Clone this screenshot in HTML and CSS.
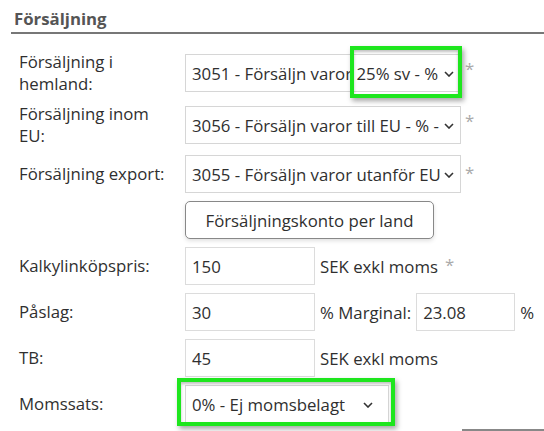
FILE: index.html
```html
<!DOCTYPE html>
<html lang="sv">
<head>
<meta charset="utf-8">
<title>Försäljning</title>
<link rel="stylesheet" href="styles.css">
</head>
<body>
<section class="section">
  <h2 class="section-title">Försäljning</h2>
  <div class="rows">
    <div class="row">
      <div class="label">Försäljning i hemland:</div>
      <div class="select wide"><span class="select-text">3051 - Försäljn varor 25% sv - %</span><svg class="chev" viewBox="0 0 10 6"><path d="M1 1l4 4 4-4" fill="none" stroke="#333" stroke-width="1.6"/></svg></div>
      <span class="req">*</span>
    </div>
    <div class="row">
      <div class="label">Försäljning inom EU:</div>
      <div class="select wide"><span class="select-text">3056 - Försäljn varor till EU - % -</span><svg class="chev" viewBox="0 0 10 6"><path d="M1 1l4 4 4-4" fill="none" stroke="#333" stroke-width="1.6"/></svg></div>
      <span class="req">*</span>
    </div>
    <div class="row">
      <div class="label">Försäljning export:</div>
      <div class="select wide"><span class="select-text">3055 - Försäljn varor utanför EU</span><svg class="chev" viewBox="0 0 10 6"><path d="M1 1l4 4 4-4" fill="none" stroke="#333" stroke-width="1.6"/></svg></div>
      <span class="req">*</span>
    </div>
    <div class="row">
      <div class="label"></div>
      <button class="btn" type="button">Försäljningskonto per land</button>
    </div>
    <div class="row">
      <div class="label">Kalkylinköpspris:</div>
      <div class="input">150</div>
      <span class="unit">SEK exkl moms</span>
      <span class="req small">*</span>
    </div>
    <div class="row">
      <div class="label">Påslag:</div>
      <div class="input">30</div>
      <span class="unit">% Marginal:</span>
      <div class="input narrow">23.08</div>
      <span class="unit pct">%</span>
    </div>
    <div class="row">
      <div class="label">TB:</div>
      <div class="input">45</div>
      <span class="unit">SEK exkl moms</span>
    </div>
    <div class="row">
      <div class="label">Momssats:</div>
      <div class="select vat"><span class="select-text">0% - Ej momsbelagt</span><svg class="chev" viewBox="0 0 10 6"><path d="M1 1l4 4 4-4" fill="none" stroke="#333" stroke-width="1.6"/></svg></div>
    </div>
  </div>
  <div class="next-rule"></div>
</section>
<div class="highlight hl-1"></div>
<div class="highlight hl-2"></div>
</body>
</html>
```
FILE: styles.css
```css
html, body {
  margin: 0;
  padding: 0;
  background: #fff;
}
body {
  font-family: "Open Sans", "Liberation Sans", sans-serif;
  font-size: 16.8px;
  color: #2f2f2f;
  width: 544px;
  height: 431px;
  overflow: hidden;
  position: relative;
}
.section {
  margin-left: 11px;
  padding-top: 8px;
}
.section-title {
  margin: 0;
  padding: 0 0 3px 3px;
  font-size: 16.8px;
  font-weight: 700;
  line-height: 21px;
  color: #555;
  border-bottom: 2px solid #777;
}
.rows {
  display: flex;
  flex-direction: column;
  gap: 8px;
  padding: 17px 0 0 8px;
}
.row {
  display: flex;
  align-items: center;
  min-height: 38px;
}
.label {
  width: 150px;
  margin-right: 16px;
  line-height: 22px;
  flex: none;
}
.select {
  position: relative;
  box-sizing: border-box;
  height: 38px;
  border: 1px solid #d6d6d6;
  background: #fff;
  display: flex;
  align-items: center;
  padding: 0 18px 0 6px;
  overflow: hidden;
  flex: none;
}
.select.wide { width: 276px; }
.select.vat { width: 204px; }
.select-text {
  white-space: nowrap;
  overflow: hidden;
  display: block;
}
.chev {
  position: absolute;
  right: 6px;
  top: 16px;
  width: 10px;
  height: 6px;
}
.select.vat .chev { right: 15px; }
.req {
  color: #aaa;
  margin-left: 4px;
  align-self: flex-start;
  margin-top: 6px;
}
.req.small { margin-left: 2px; margin-top: 6px; }
.btn {
  box-sizing: border-box;
  width: 249px;
  height: 38px;
  border: 1px solid #888;
  border-radius: 5px;
  background: #fff;
  font: inherit;
  color: #2f2f2f;
  box-shadow: 0 2px 4px rgba(0,0,0,0.12);
  padding: 0;
}
.input {
  box-sizing: border-box;
  width: 130px;
  height: 38px;
  border: 1px solid #dcdcdc;
  padding: 0 6px;
  display: flex;
  align-items: center;
  flex: none;
}
.input.narrow { width: 99px; }
.unit {
  margin-left: 5px;
  margin-right: 5px;
  white-space: nowrap;
}
.unit.pct { margin-left: 5px; }
.next-rule {
  margin: 6px 0 0 451px;
  height: 2px;
  background: #888;
}
.highlight {
  position: absolute;
  box-sizing: border-box;
  border: 4px solid #1ee61e;
  box-shadow: 2px 3px 5px rgba(0,0,0,0.35), inset 0 2px 3px rgba(0,0,0,0.25);
}
.hl-1 { left: 350px; top: 46px; width: 112px; height: 52px; }
.hl-2 { left: 177px; top: 378px; width: 218px; height: 48px; }
```
